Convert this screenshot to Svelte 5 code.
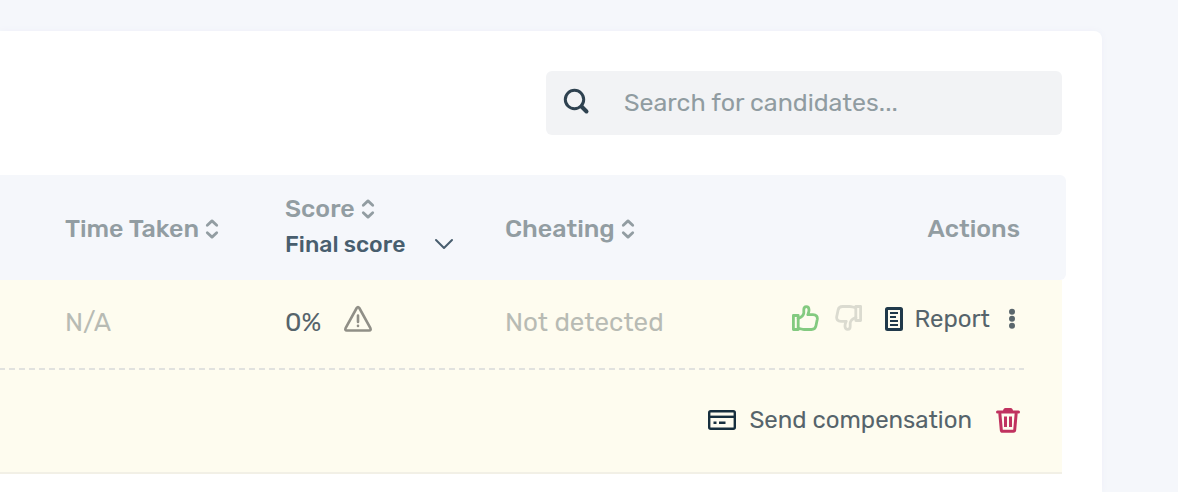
<script lang="ts">
    let search = $state('');
    let scoreType = $state('final');
</script>

{#snippet sortIcon()}
    <svg class="sort" width="14" height="20" viewBox="0 0 14 20" fill="none" stroke="currentColor" stroke-width="2.8" stroke-linecap="round" stroke-linejoin="round">
        <path d="M2.3 6.2 7 1.9l4.7 4.3M2.3 13.8 7 18.1l4.7-4.3" />
    </svg>
{/snippet}

<div class="page">
    <main class="card">
        <div class="toolbar">
            <label class="search">
                <svg width="28" height="32" viewBox="0 0 28 32" fill="none" stroke="#2f4250" stroke-linecap="round">
                    <circle cx="12.5" cy="12.5" r="9.2" stroke-width="3" />
                    <path d="M19.5 19.5 24.5 24.5" stroke-width="4" />
                </svg>
                <input type="text" placeholder="Search for candidates..." aria-label="Search for candidates" bind:value={search} />
            </label>
        </div>

        <table>
            <thead>
                <tr>
                    <th class="time"><button class="sort-button">Time Taken {@render sortIcon()}</button></th>
                    <th class="score">
                        <button class="sort-button">Score {@render sortIcon()}</button>
                        <div class="score-select">
                            <select aria-label="Score type" bind:value={scoreType}>
                                <option value="final">Final score</option>
                            </select>
                            <svg width="20" height="12" viewBox="0 0 20 12" fill="none" stroke="#485e6e" stroke-width="2" stroke-linecap="round" stroke-linejoin="round">
                                <path d="M2 2l8 8 8-8" />
                            </svg>
                        </div>
                    </th>
                    <th class="cheating"><button class="sort-button">Cheating {@render sortIcon()}</button></th>
                    <th class="actions">Actions</th>
                </tr>
            </thead>
            <tbody>
                <tr class="candidate">
                    <td class="time muted">N/A</td>
                    <td class="score">
                        <div class="score-value">
                            0%
                            <svg width="30" height="28" viewBox="0 0 30 28" fill="none" stroke="#908f87" stroke-width="2.6" stroke-linecap="round" stroke-linejoin="round">
                                <path d="M13.7 3 2.6 23.2q-1 2.100 1.300 2.300h22.200q2.300-.2 1.300-2.300L16.300 3q-1.300-1.900-2.600 0Z" />
                                <path d="M15 10.500v6.500M15 20.800v.2" />
                            </svg>
                        </div>
                    </td>
                    <td class="muted">Not detected</td>
                    <td class="actions">
                        <div class="action-list">
                            <button aria-label="Approve">
                                <svg width="28" height="28" viewBox="0 0 28 28" fill="none" stroke="#83ca80" stroke-width="2.8" stroke-linecap="round" stroke-linejoin="round">
                                    <path d="M2.4 10.500h4.800v14H2.400Z" />
                                    <path d="M7.200 13.500c3-1.200 5.300-2.800 5.600-5.500V4.800c0-4.200 5-4.200 5.200 0 .1 2-.5 3.200-1.200 4.900h5.200c3.300 0 4.700 2 4.300 4.600l-1.400 6.700c-.5 2.400-2 3.500-4.400 3.500h-7.300c-2.300 0-3.500-1-6-1" />
                                </svg>
                            </button>
                            <button class="reject" aria-label="Reject">
                                <svg width="28" height="28" viewBox="0 0 28 28" fill="none" stroke="#dbdbd0" stroke-width="2.8" stroke-linecap="round" stroke-linejoin="round">
                                    <path d="M25.600 15.500h-4.800v-14h4.800Z" />
                                    <path d="M20.800 12.500c-3 1.200-5.300 2.800-5.600 5.500v3.200c0 4.200-5 4.200-5.200 0-.1-2 .5-3.200 1.200-4.900H6c-3.300 0-4.700-2-4.300-4.600L3.100 5c.5-2.400 2-3.500 4.400-3.500h7.300c2.300 0 3.500 1 6 1" />
                                </svg>
                            </button>
                            <button class="labelled report">
                                <svg width="18" height="24" viewBox="0 0 18 24" fill="none" stroke="#20394a">
                                    <rect x="1.5" y="1.5" width="15" height="21" rx="1" stroke-width="3" />
                                    <path d="M5 6h8M5 10h6M5 14h8M5 18h8" stroke-width="2" />
                                </svg>
                                Report
                            </button>
                            <button aria-label="More actions">
                                <svg width="8" height="22" viewBox="0 0 8 22" fill="#5a666c">
                                    <circle cx="4" cy="3.7" r="3" />
                                    <circle cx="4" cy="10.7" r="3" />
                                    <circle cx="4" cy="17.7" r="3" />
                                </svg>
                            </button>
                        </div>
                    </td>
                </tr>
                <tr class="details">
                    <td colspan="4">
                        <div class="divider"></div>
                        <div class="detail-actions">
                            <button class="labelled">
                                <svg width="28" height="20" viewBox="0 0 28 20" fill="none" stroke="#172f3e" stroke-width="2.4">
                                    <rect x="1.2" y="1.2" width="25.6" height="17.6" rx="1.5" />
                                    <path d="M1 6.800h26" />
                                    <path d="M5.500 12.800h3M11 12.800h6.500" />
                                </svg>
                                Send compensation
                            </button>
                            <button aria-label="Delete">
                                <svg width="24" height="26" viewBox="0 0 24 26" fill="none" stroke="#c0325f" stroke-linejoin="round">
                                    <path d="M3.800 6l1.500 17q.1 1.200 1.300 1.200h10.800q1.200 0 1.300-1.200L20.200 6" stroke-width="3" />
                                    <path d="M1.500 5h21" stroke-width="3" stroke-linecap="round" />
                                    <path d="M7 4.500Q7 1 9.500 1h5Q17 1 17 4.500Z" fill="#c0325f" stroke="none" />
                                    <path d="M9.500 9.500V20M14.500 9.500V20" stroke-width="3" />
                                </svg>
                            </button>
                        </div>
                    </td>
                </tr>
            </tbody>
        </table>
    </main>
</div>

<style>
    :global(body) {
        background: #f5f7fb;
    }
    .page {
        box-sizing: border-box;
        min-height: 100vh;
        display: flex;
        padding: 31px 76px 0 0;
        font-family: Rubik, Roboto, sans-serif;
        font-size: 26px;
        line-height: 32px;
        color: #56646b;
    }
    .card {
        box-sizing: border-box;
        flex: 1;
        padding: 40px 40px 0 0;
        background: #fff;
        border-radius: 0 8px 0 0;
        box-shadow: 0 0 6px #eef0f8;
    }
    button,
    input,
    select {
        font: inherit;
        color: inherit;
        background: none;
        border: 0;
        padding: 0;
        margin: 0;
    }
    button {
        display: inline-flex;
        align-items: center;
        cursor: pointer;
    }
    svg {
        display: block;
        flex: none;
    }
    .toolbar {
        display: flex;
        justify-content: flex-end;
        margin-bottom: 40px;
    }
    .search {
        box-sizing: border-box;
        display: flex;
        align-items: center;
        gap: 34px;
        width: 516px;
        height: 64px;
        padding: 0 16px;
        background: #f2f3f5;
        border-radius: 6px;
        font-size: 25px;
    }
    .search input {
        flex: 1;
        min-width: 0;
        outline: none;
    }
    .search input::placeholder {
        color: #909ca1;
        opacity: 1;
    }
    table {
        width: 100%;
        table-layout: fixed;
        border-collapse: separate;
        border-spacing: 0;
    }
    th,
    td {
        padding: 0;
        text-align: left;
    }
    th {
        box-sizing: border-box;
        height: 105px;
        padding-top: 2px;
        background: #f5f7fb;
        color: #929da2;
        font-size: 25px;
        font-weight: 500;
    }
    /* the header bar is slightly wider than the rows under it */
    th:last-child {
        border-radius: 0 6px 6px 0;
        box-shadow: 4px 0 0 #f5f7fb;
    }
    th.time {
        width: 285px;
    }
    .time {
        padding-left: 65px;
    }
    th.score {
        width: 220px;
        padding-bottom: 4px;
    }
    th.cheating {
        width: 220px;
    }
    th.actions {
        padding-right: 42px;
        text-align: right;
    }
    .sort-button {
        gap: 6px;
    }
    .score-select {
        display: flex;
        align-items: center;
        gap: 28px;
        margin-top: 3px;
        color: #485e6e;
        font-size: 23px;
    }
    .score-select select {
        appearance: none;
        outline: none;
    }
    .candidate td {
        box-sizing: border-box;
        height: 88px;
        padding-bottom: 2px;
        background: #fefcef;
    }
    .candidate .muted {
        color: #b8bbb4;
    }
    .score-value {
        display: flex;
        align-items: center;
        gap: 22px;
    }
    .score-value svg {
        margin-bottom: 8px;
    }
    .candidate .actions {
        padding-right: 46px;
        font-size: 24px;
    }
    .action-list,
    .detail-actions {
        display: flex;
        align-items: center;
        justify-content: flex-end;
    }
    .action-list {
        gap: 16px;
        margin-bottom: 8px;
    }
    .reject {
        margin-right: 6px;
    }
    .labelled {
        gap: 13px;
    }
    .report {
        gap: 11px;
        margin-right: 2px;
    }
    .details td {
        background: #fefcef;
        border-bottom: 2px solid #f2f0e6;
        font-size: 24px;
    }
    .divider {
        height: 2px;
        margin-right: 38px;
        background: repeating-linear-gradient(90deg, #e1e2df 0 5px, transparent 5px 9px, #e1e2df 9px 10px);
    }
    .detail-actions {
        gap: 24px;
        height: 100px;
        padding: 0 42px 2px 0;
    }
</style>
